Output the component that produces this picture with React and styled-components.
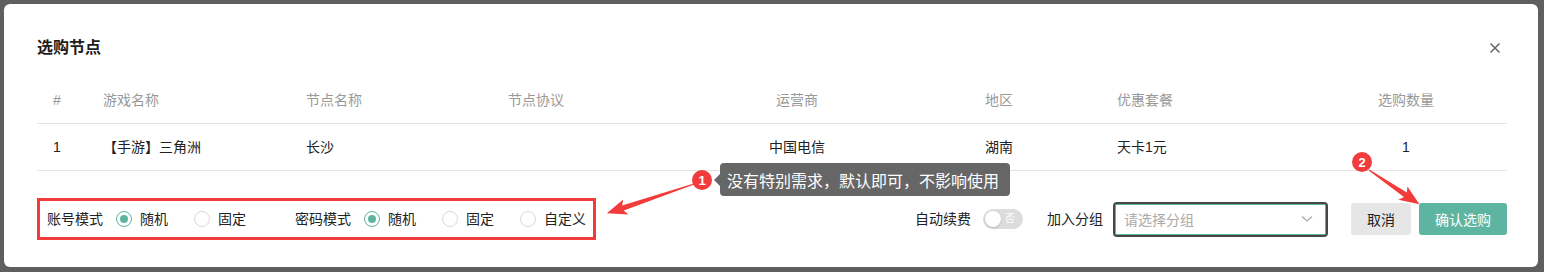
import React from "react";
import styled, { createGlobalStyle } from "styled-components";

const GlobalStyle = createGlobalStyle`
  html, body {
    margin: 0;
    padding: 0;
    background: #5f5f5f;
    font-family: "Liberation Sans", "Noto Sans CJK SC", sans-serif;
    color: #222;
  }
  * { box-sizing: border-box; }
`;

const Modal = styled.div`
  position: relative;
  margin: 4px 0 0 4px;
  width: 1534px;
  height: 263px;
  background: #fff;
  border-radius: 6px;
  padding: 30px 31px 0 33px;
`;

const Header = styled.div`
  display: flex;
  align-items: center;
  justify-content: space-between;
  height: 28px;
`;

const Title = styled.h2`
  margin: 0;
  font-size: 16px;
  font-weight: 700;
  color: #1d1d1d;
  line-height: 28px;
`;

const Close = styled.button`
  display: flex;
  align-items: center;
  justify-content: center;
  width: 14px;
  height: 14px;
  margin-right: 5px;
  padding: 0;
  border: none;
  background: none;
  cursor: pointer;
`;

const Table = styled.div`
  margin-top: 15px;
`;

const Row = styled.div`
  display: grid;
  grid-template-columns: 50px 203px 202px 133px 344px 132px 204px 202px;
  height: 47px;
  align-items: center;
  border-bottom: 1px solid #e4e4e4;
  font-size: 14px;
  line-height: 20px;
  color: ${(p) => (p.$head ? "#999" : "#222")};
`;

const Cell = styled.div`
  padding: 0 16px;
  white-space: nowrap;
  text-align: ${(p) => (p.$center ? "center" : "left")};
`;

const Footer = styled.div`
  display: flex;
  align-items: center;
  justify-content: space-between;
  margin-top: 27px;
  height: 42px;
`;

const ModeBox = styled.div`
  display: flex;
  align-items: center;
  height: 42px;
  padding: 0 7px 0 7px;
  border: 3px solid #f23b3b;
`;

const ModeGroup = styled.div`
  display: flex;
  align-items: center;
  & + & {
    margin-left: 49px;
  }
`;

const Label = styled.span`
  font-size: 14px;
  line-height: 20px;
  color: #222;
  margin-right: ${(p) => p.$gap || 0}px;
  white-space: nowrap;
`;

const Option = styled.label`
  display: flex;
  align-items: center;
  gap: 8px;
  font-size: 14px;
  line-height: 20px;
  color: #222;
  cursor: pointer;
  & + & {
    margin-left: 26px;
  }
`;

const Radio = styled.span`
  display: flex;
  align-items: center;
  justify-content: center;
  width: 16px;
  height: 16px;
  border-radius: 50%;
  border: 1px solid ${(p) => (p.$checked ? "#5db5a1" : "#d9d9d9")};
  &::after {
    content: "";
    width: 8px;
    height: 8px;
    border-radius: 50%;
    background: ${(p) => (p.$checked ? "#5db5a1" : "transparent")};
  }
`;

const Controls = styled.div`
  display: flex;
  align-items: center;
`;

const Switch = styled.div`
  display: flex;
  align-items: center;
  justify-content: space-between;
  width: 40px;
  height: 20px;
  margin: 0 24px 0 12px;
  padding: 0 8px 0 2px;
  border-radius: 10px;
  background: #dcdcdc;
  color: #fff;
  font-size: 10px;
  line-height: 10px;
`;

const Knob = styled.span`
  width: 16px;
  height: 16px;
  border-radius: 50%;
  background: #fff;
  box-shadow: 0 1px 2px rgba(0, 0, 0, 0.18);
`;

const Select = styled.div`
  display: flex;
  align-items: center;
  justify-content: space-between;
  width: 215px;
  height: 35px;
  margin: 0 23px 0 10px;
  padding: 0 13px 0 9px;
  border: 2px solid #474747;
  border-radius: 4px;
  box-shadow: inset 0 0 0 1px #5db5a1;
  font-size: 14px;
  color: #aaa;
`;

const Button = styled.button`
  height: 32px;
  width: ${(p) => p.$w}px;
  border: none;
  border-radius: 3px;
  font-family: inherit;
  font-size: 14px;
  cursor: pointer;
  background: ${(p) => (p.$primary ? "#5db5a1" : "#e6e6e6")};
  color: ${(p) => (p.$primary ? "#fff" : "#222")};
  & + & {
    margin-left: 8px;
  }
`;

const Tip = styled.div`
  position: absolute;
  left: 716px;
  top: 159px;
  width: 290px;
  height: 33px;
  padding-left: 7px;
  display: flex;
  align-items: center;
  background: #666;
  border-radius: 4px;
  color: #fff;
  font-size: 16px;
  white-space: nowrap;
  &::before {
    content: "";
    position: absolute;
    left: -6px;
    top: 11px;
    border-style: solid;
    border-width: 6px 6px 6px 0;
    border-color: transparent #666 transparent transparent;
  }
`;

const Overlay = styled.svg`
  position: absolute;
  left: -4px;
  top: -4px;
  width: 1544px;
  height: 272px;
  pointer-events: none;
  overflow: visible;
`;

const Arrow = ({ x, y, len, angle }) => (
  <polygon
    transform={`translate(${x} ${y}) rotate(${angle})`}
    points={`0,-0.6 ${len - 17},-2.6 ${len - 20},-8 ${len},0 ${len - 20},8 ${len - 17},2.6 0,0.6`}
    fill="#f23b3b"
  />
);

const Badge = ({ cx, cy, n }) => (
  <g>
    <circle cx={cx} cy={cy} r="10" fill="#f23b3b" />
    <text x={cx} y={cy + 4.5} textAnchor="middle" fontSize="13" fontWeight="700" fill="#fff" fontFamily="Liberation Sans, sans-serif">{n}</text>
  </g>
);

const columns = [
  { head: "#", value: "1" },
  { head: "游戏名称", value: "【手游】三角洲" },
  { head: "节点名称", value: "长沙" },
  { head: "节点协议", value: "" },
  { head: "运营商", value: "中国电信", center: true },
  { head: "地区", value: "湖南" },
  { head: "优惠套餐", value: "天卡1元" },
  { head: "选购数量", value: "1", center: true },
];

const modes = [
  { label: "账号模式", options: ["随机", "固定"] },
  { label: "密码模式", options: ["随机", "固定", "自定义"] },
];

export default function App() {
  return (
    <>
      <GlobalStyle />
      <Modal>
        <Header>
          <Title>选购节点</Title>
          <Close aria-label="close">
            <svg width="10" height="10" viewBox="0 0 10 10">
              <path d="M0.5 0.5 L9.5 9.5 M9.5 0.5 L0.5 9.5" stroke="#666" strokeWidth="1.5" />
            </svg>
          </Close>
        </Header>

        <Table>
          <Row $head>
            {columns.map((c) => (
              <Cell key={c.head} $center={c.center}>{c.head}</Cell>
            ))}
          </Row>
          <Row>
            {columns.map((c) => (
              <Cell key={c.head} $center={c.center}>{c.value}</Cell>
            ))}
          </Row>
        </Table>

        <Footer>
          <ModeBox>
            {modes.map((m) => (
              <ModeGroup key={m.label}>
                <Label $gap={13}>{m.label}</Label>
                {m.options.map((o, i) => (
                  <Option key={o}>
                    <Radio $checked={i === 0} />
                    {o}
                  </Option>
                ))}
              </ModeGroup>
            ))}
          </ModeBox>

          <Controls>
            <Label>自动续费</Label>
            <Switch>
              <Knob />
              否
            </Switch>
            <Label>加入分组</Label>
            <Select>
              请选择分组
              <svg width="12" height="8" viewBox="0 0 12 8">
                <path d="M1 1.5 L6 6 L11 1.5" fill="none" stroke="#aaa" strokeWidth="1.3" />
              </svg>
            </Select>
            <Button $w={60}>取消</Button>
            <Button $w={88} $primary>确认选购</Button>
          </Controls>
        </Footer>

        <Tip>没有特别需求，默认即可，不影响使用</Tip>

        <Overlay viewBox="0 0 1544 272">
          <Arrow x={694} y={184} len={92} angle={161.4} />
          <Arrow x={1369} y={170} len={61} angle={34.2} />
          <Badge cx={702} cy={180} n="1" />
          <Badge cx={1362} cy={162} n="2" />
        </Overlay>
      </Modal>
    </>
  );
}
